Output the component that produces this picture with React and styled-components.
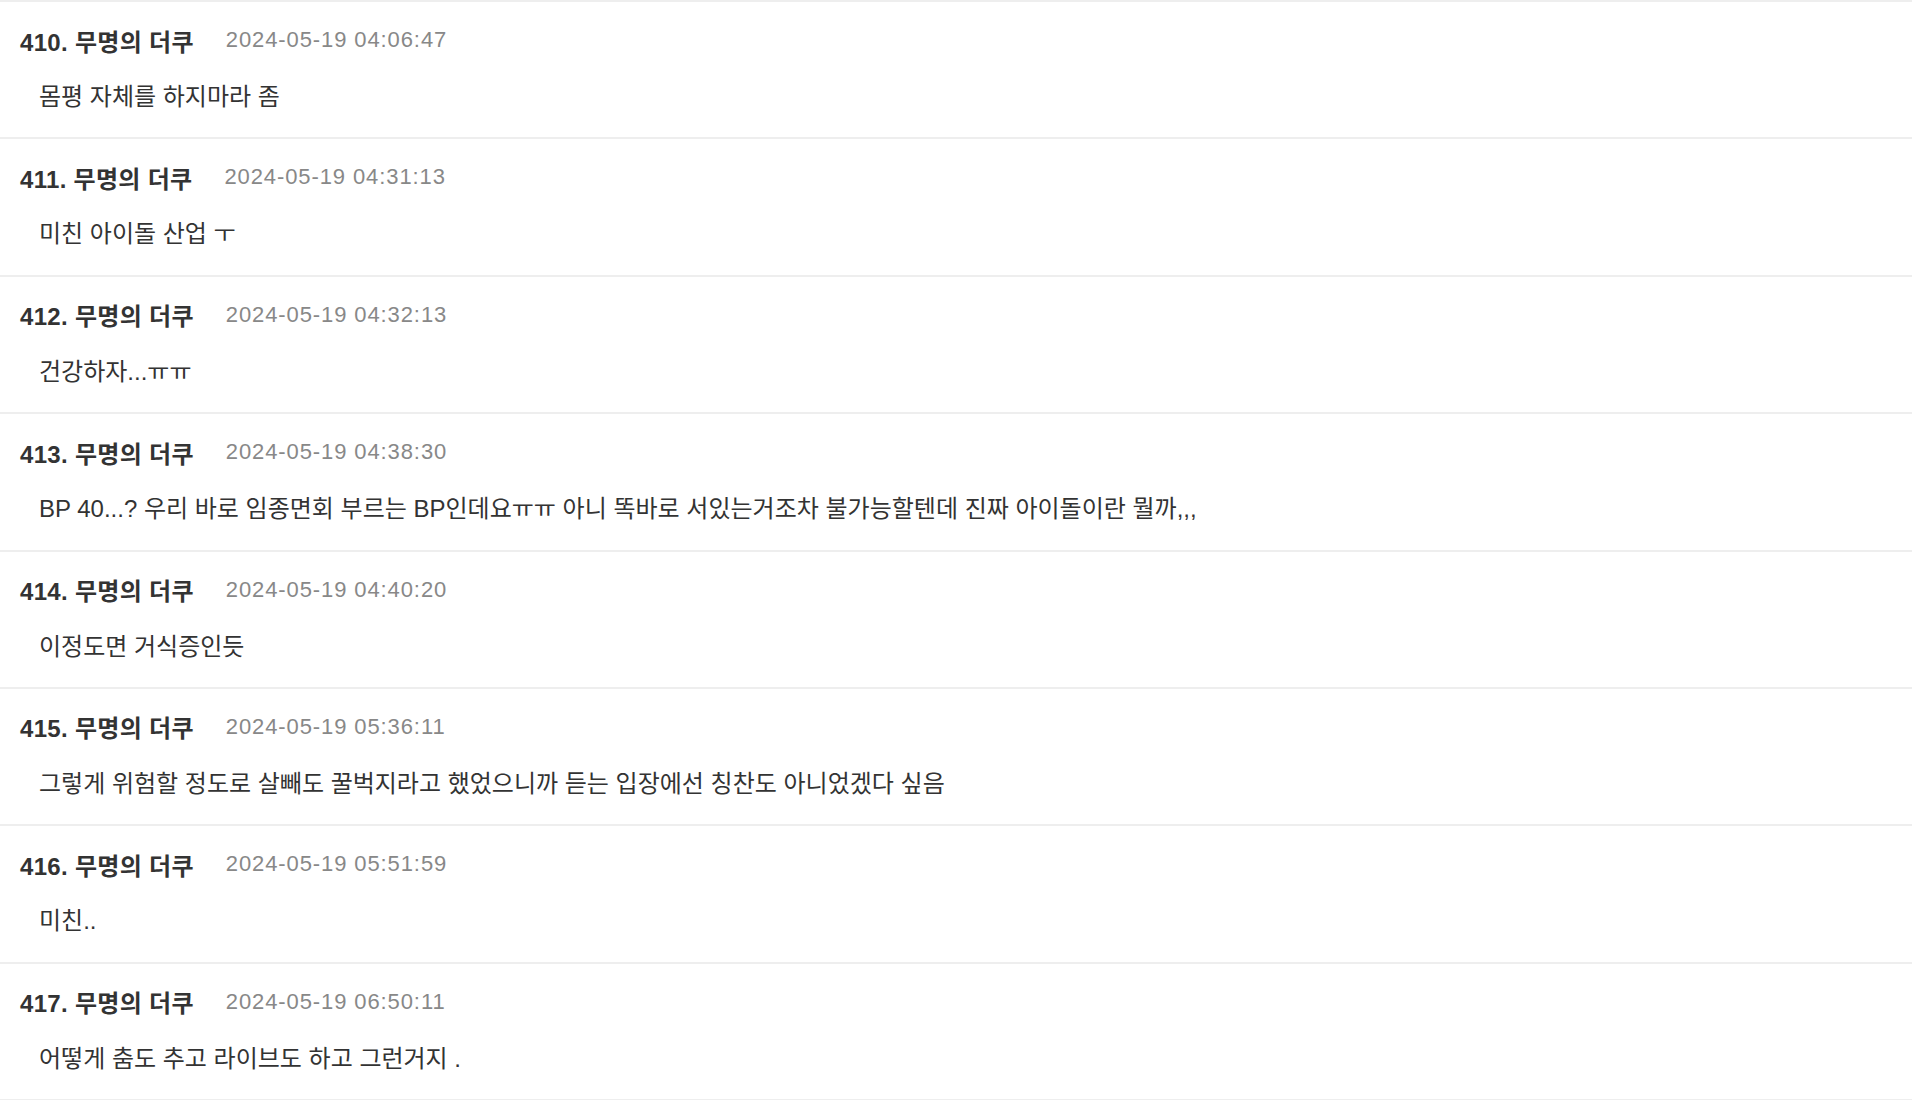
import React from "react";
import styled, { createGlobalStyle } from "styled-components";

const comments = [
    { no: 410, date: "2024-05-19 04:06:47", text: "몸평 자체를 하지마라 좀" },
    { no: 411, date: "2024-05-19 04:31:13", text: "미친 아이돌 산업 ㅜ" },
    { no: 412, date: "2024-05-19 04:32:13", text: "건강하자...ㅠㅠ" },
    { no: 413, date: "2024-05-19 04:38:30", text: "BP 40...? 우리 바로 임종면회 부르는 BP인데요ㅠㅠ 아니 똑바로 서있는거조차 불가능할텐데 진짜 아이돌이란 뭘까,,," },
    { no: 414, date: "2024-05-19 04:40:20", text: "이정도면 거식증인듯" },
    { no: 415, date: "2024-05-19 05:36:11", text: "그렇게 위험할 정도로 살빼도 꿀벅지라고 했었으니까 듣는 입장에선 칭찬도 아니었겠다 싶음" },
    { no: 416, date: "2024-05-19 05:51:59", text: "미친.." },
    { no: 417, date: "2024-05-19 06:50:11", text: "어떻게 춤도 추고 라이브도 하고 그런거지 ." },
];

const App = () => {
    return (
        <>
            <GlobalStyle />
            <CommentList>
                {comments.map((comment) => {
                    return (
                        <CommentItem key={comment.no}>
                            <CommentHeader>
                                <Author>{comment.no}. 무명의 더쿠</Author>
                                <CommentDate>{comment.date}</CommentDate>
                            </CommentHeader>
                            <CommentText>{comment.text}</CommentText>
                        </CommentItem>
                    );
                })}
            </CommentList>
        </>
    );
};

export default App;

const GlobalStyle = createGlobalStyle`
    body {
        margin: 0;
        background: #fff;
        font-family: "Liberation Sans", "Noto Sans CJK KR", sans-serif;
    }
`;

const CommentList = styled.ul`
    list-style: none;
    margin: 0;
    padding: 0;
    width: calc(100% - 8px);
    border-top: 2px solid #eeeeee;
`;

const CommentItem = styled.li`
    display: flex;
    flex-direction: column;
    gap: 27px;
    padding: 24px 20px 24.4px;
    border-bottom: 2px solid #eeeeee;
`;

const CommentHeader = styled.div`
    display: flex;
    align-items: center;
    gap: 32px;
    height: 28px;
`;

const Author = styled.strong`
    font-size: 24px;
    font-weight: 700;
    letter-spacing: 0.3px;
    color: #333;
`;

const CommentDate = styled.span`
    font-size: 22px;
    letter-spacing: 0.9px;
    color: #888;
`;

const CommentText = styled.p`
    margin: 0;
    padding-left: 19px;
    font-size: 24px;
    line-height: 32px;
    color: #333;
`;
